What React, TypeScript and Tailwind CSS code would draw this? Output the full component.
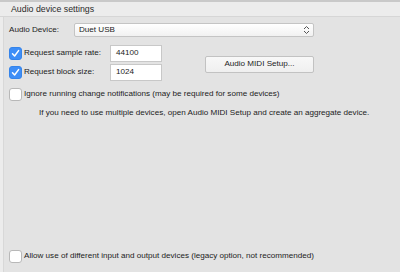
import React from "react";

function Check({ checked }: { checked?: boolean }) {
  return checked ? (
    <div className="w-[13px] h-[13px] rounded-[3px] bg-[#3e8ef7] border border-[#3584ea] flex items-center justify-center shrink-0">
      <svg width="9" height="9" viewBox="0 0 9 9">
        <path d="M1.5 4.8 L3.6 7 L7.6 1.6" fill="none" stroke="white" strokeWidth="1.5" strokeLinecap="round" strokeLinejoin="round" />
      </svg>
    </div>
  ) : (
    <div className="w-[13px] h-[13px] rounded-[3px] bg-white border border-[#b8b8b8] shrink-0" />
  );
}

export default function App() {
  return (
    <div
      className="w-[400px] h-[272px] bg-[#ececec] flex flex-col text-[8.1px] text-[#1c1c1c] overflow-hidden whitespace-nowrap"
      style={{ fontFamily: '"Liberation Sans", Arial, sans-serif' }}
    >
      <div className="h-[2px] bg-[#c9c9c9]" />
      <div className="h-[15px] pl-[11px] pt-[2px] flex items-center text-[8.8px] text-[#2a2a2a] border-b border-[#d6d6d6]">
        Audio device settings
      </div>
      <div className="flex-1 ml-[3px] bg-[#e3e3e3] border-l border-[#d8d8d8] pl-[5px] flex flex-col">
        <div className="flex items-center mt-[6px] h-[14px]">
          <span className="w-[65px]">Audio Device:</span>
          <div className="w-[240px] h-[14px] bg-gradient-to-b from-white to-[#f1f1f1] border border-[#c4c4c4] rounded-[2px] flex items-center pl-[4px] pr-[3px] justify-between">
            <span>Duet USB</span>
            <svg width="7" height="10" viewBox="0 0 7 10">
              <path d="M1 4 L3.5 1.5 L6 4 M1 6 L3.5 8.5 L6 6" fill="none" stroke="#555" strokeWidth="1" />
            </svg>
          </div>
        </div>
        <div className="flex mt-[8px]">
          <div className="flex flex-col">
            <div className="flex items-center h-[17px]">
              <Check checked />
              <span className="ml-[2px] w-[86px]">Request sample rate:</span>
              <div className="w-[52px] h-[17px] bg-white border border-[#c8c8c8] pl-[5px] flex items-center">44100</div>
            </div>
            <div className="flex items-center h-[17px] mt-[2px]">
              <Check checked />
              <span className="ml-[2px] w-[86px]">Request block size:</span>
              <div className="w-[52px] h-[17px] bg-white border border-[#c8c8c8] pl-[5px] flex items-center">1024</div>
            </div>
          </div>
          <div className="ml-[43px] mt-[11px] w-[109px] h-[17px] bg-gradient-to-b from-[#f8f8f8] to-[#efefef] border border-[#c2c2c2] rounded-[2px] flex items-center justify-center">
            Audio MIDI Setup...
          </div>
        </div>
        <div className="flex items-center mt-[7px]">
          <Check />
          <span className="ml-[2px]">Ignore running change notifications (may be required for some devices)</span>
        </div>
        <div className="mt-[6px] pl-[30px] h-[13px] flex items-center">
          If you need to use multiple devices, open Audio MIDI Setup and create an aggregate device.
        </div>
        <div className="flex-1" />
        <div className="flex items-center mb-[9px]">
          <Check />
          <span className="ml-[2px]">Allow use of different input and output devices (legacy option, not recommended)</span>
        </div>
      </div>
    </div>
  );
}
